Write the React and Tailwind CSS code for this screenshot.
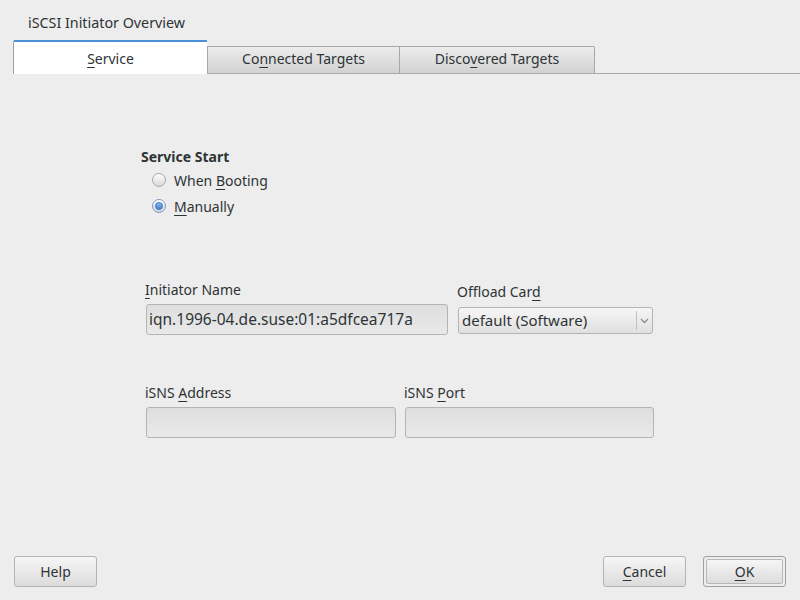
import React from 'react';

const U = ({ children }) => (
  <span className="underline underline-offset-[3px] decoration-1">{children}</span>
);

const Radio = ({ checked, children }) => (
  <div className="flex items-center h-[26px]">
    <span
      className={`w-[14px] h-[14px] rounded-full border flex items-center justify-center ${
        checked
          ? 'border-[#7a9cc4] bg-gradient-to-b from-[#ffffff] to-[#d4d4d4]'
          : 'border-[#a8a8a8] bg-gradient-to-b from-[#ffffff] to-[#d8d8d8]'
      }`}
    >
      {checked && (
        <span className="w-[8px] h-[8px] rounded-full bg-gradient-to-b from-[#8ab8ee] to-[#3f83d6] border border-[#3a73b8]" />
      )}
    </span>
    <span className="ml-[8px]">{children}</span>
  </div>
);

const Field = ({ value, className }) => (
  <div
    className={`h-[31px] border border-[#b4b4b4] rounded-[3px] bg-gradient-to-b from-[#dedede] to-[#e9e9e9] flex items-center pl-[2px] text-[15.5px] text-[#2e3436] ${className}`}
  >
    {value}
  </div>
);

const Button = ({ children, primary }) =>
  primary ? (
    <div className="w-[83px] h-[31px] border border-[#a0a0a0] rounded-[3px] p-[2px] bg-[#ededed]">
      <div className="w-full h-full border border-[#b8b8b8] rounded-[2px] bg-gradient-to-b from-[#f6f6f6] to-[#dcdcdc] flex items-center justify-center">
        {children}
      </div>
    </div>
  ) : (
    <div className="w-[83px] h-[31px] border border-[#b4b4b4] rounded-[3px] bg-gradient-to-b from-[#f6f6f6] to-[#dcdcdc] flex items-center justify-center">
      {children}
    </div>
  );

export default function App() {
  return (
    <div
      className="w-[800px] h-[600px] bg-[#ededed] flex flex-col text-[14px] text-[#2e3436]"
      style={{ fontFamily: '"Noto Sans", "DejaVu Sans", sans-serif' }}
    >
      {/* Title */}
      <div className="h-[40px] pl-[28px] pt-[14px] leading-[18px] text-[14.3px]">iSCSI Initiator Overview</div>

      {/* Tabs */}
      <div className="flex items-end h-[34px] pl-[13px]">
        <div className="w-[194px] h-[34px] bg-white border-t-2 border-t-[#4a90d9] border-l border-l-[#a0a0a0] rounded-tl-[2px] flex items-center justify-center">
          <span><U>S</U>ervice</span>
        </div>
        <div className="w-[193px] h-[28px] pb-[3px] border border-[#a8a8a8] bg-gradient-to-b from-[#ececec] to-[#d2d2d2] flex items-center justify-center">
          <span>Co<U>n</U>nected Targets</span>
        </div>
        <div className="w-[195px] h-[28px] pb-[3px] border border-l-0 border-[#a8a8a8] rounded-tr-[2px] bg-gradient-to-b from-[#ececec] to-[#d2d2d2] flex items-center justify-center">
          <span>Disco<U>v</U>ered Targets</span>
        </div>
        <div className="flex-1 h-[28px] border-b border-[#a8a8a8]" />
      </div>

      {/* Content */}
      <div className="flex-1 flex flex-col">
        <div className="ml-[141px] mt-[74px]">
          <div className="font-bold leading-[18px]">Service Start</div>
          <div className="ml-[11px] mt-[1px]">
            <Radio>When <U>B</U>ooting</Radio>
            <Radio checked><U>M</U>anually</Radio>
          </div>
        </div>

        <div className="flex ml-[145px] mt-[62px]">
          <div className="w-[303px]">
            <div className="leading-[18px]"><U>I</U>nitiator Name</div>
            <Field value="iqn.1996-04.de.suse:01:a5dfcea717a" className="mt-[5px] ml-[1px] w-[302px]" />
          </div>
          <div className="ml-[9px] mt-[2px]">
            <div className="leading-[18px]">Offload Car<U>d</U></div>
            <div className="mt-[6px] ml-[1px] w-[195px] h-[27px] border border-[#b4b4b4] rounded-[3px] bg-gradient-to-b from-[#f6f6f6] to-[#e0e0e0] flex items-center">
              <span className="flex-1 pl-[3px] text-[15px]">default (Software)</span>
              <span className="h-[19px] border-l border-[#c0c0c0] w-[16px] flex items-center justify-center">
                <svg width="9" height="6" viewBox="0 0 9 6">
                  <path d="M1 1 L4.5 4.5 L8 1" fill="none" stroke="#8a8a8a" strokeWidth="1.3" />
                </svg>
              </span>
            </div>
          </div>
        </div>

        <div className="flex ml-[145px] mt-[49px]">
          <div className="w-[251px]">
            <div className="leading-[18px]">iSNS <U>A</U>ddress</div>
            <Field className="mt-[5px] ml-[1px] w-[250px]" />
          </div>
          <div className="ml-[8px]">
            <div className="leading-[18px]">iSNS <U>P</U>ort</div>
            <Field className="mt-[5px] ml-[1px] w-[249px]" />
          </div>
        </div>

        {/* Bottom buttons */}
        <div className="mt-auto flex items-center px-[14px] pb-[13px]">
          <Button>Help</Button>
          <div className="flex-1" />
          <Button><span><U>C</U>ancel</span></Button>
          <div className="w-[17px]" />
          <Button primary><span><U>O</U>K</span></Button>
        </div>
      </div>
    </div>
  );
}
